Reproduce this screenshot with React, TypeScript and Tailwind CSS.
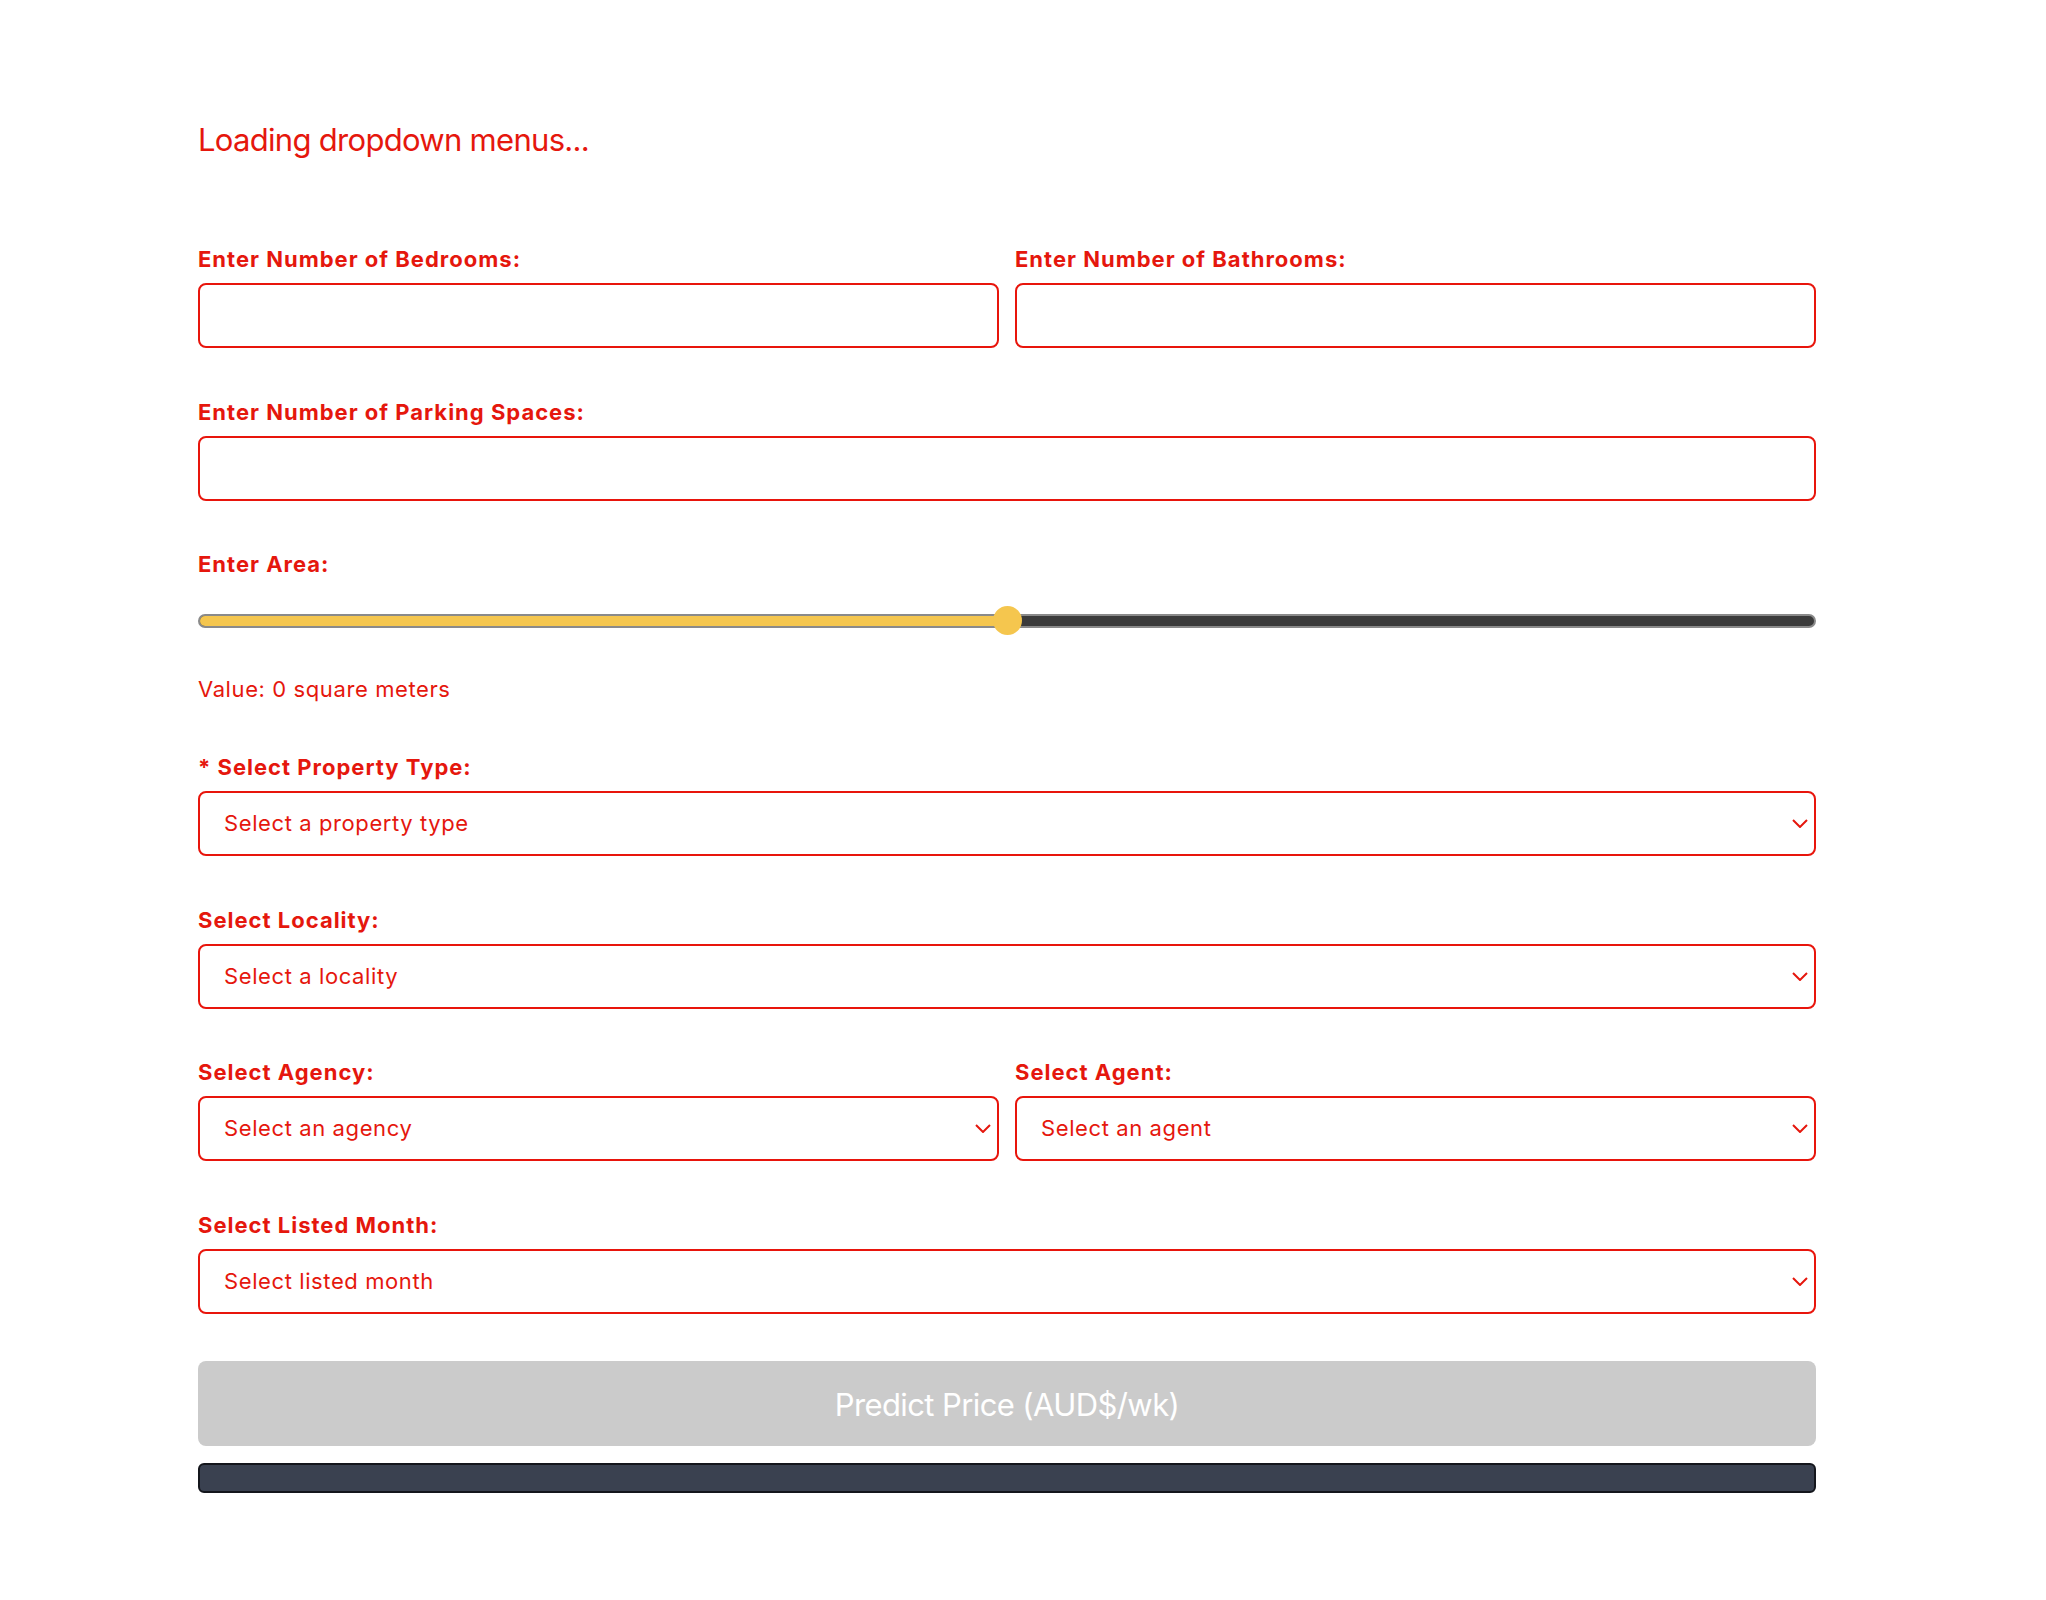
import React from "react";

const RED = "text-[#e5170d]";

function Label({ children }: { children: React.ReactNode }) {
  return (
    <label className={`mb-[10px] block text-[22px] leading-[27px] font-bold tracking-[1px] ${RED}`}>
      {children}
    </label>
  );
}

function TextField({ label }: { label: string }) {
  return (
    <div>
      <Label>{label}</Label>
      <input
        type="text"
        className="block h-[65px] w-full rounded-[8px] border-2 border-[#e8150c] bg-white px-[24px] text-[22px] outline-none"
      />
    </div>
  );
}

function SelectField({ label, placeholder }: { label: string; placeholder: string }) {
  return (
    <div>
      <Label>{label}</Label>
      <div className="flex h-[65px] w-full items-center justify-between rounded-[8px] border-2 border-[#e8150c] bg-white pl-[24px] pr-[6px]">
        <span className={`text-[22px] leading-[27px] tracking-[0.6px] ${RED}`}>{placeholder}</span>
        <svg width="16" height="9" viewBox="0 0 16 9" fill="none">
          <polyline points="1,1 8,8 15,1" stroke="#e5170d" strokeWidth="2" />
        </svg>
      </div>
    </div>
  );
}

export default function App() {
  const area = 0;
  return (
    <main className="min-h-screen bg-white font-['Inter','Liberation_Sans',sans-serif]">
      <div className="ml-[198px] w-[1618px] pt-[120px] pb-[100px]">
        <p className={`text-[31px] leading-[39px] tracking-[-0.7px] ${RED}`}>Loading dropdown menus...</p>

        <div className="mt-[87px] flex flex-col gap-[50.5px]">
          <div className="grid grid-cols-2 gap-[16px]">
            <TextField label="Enter Number of Bedrooms:" />
            <TextField label="Enter Number of Bathrooms:" />
          </div>

          <TextField label="Enter Number of Parking Spaces:" />

          <div>
            <label className={`block text-[22px] leading-[27px] font-bold tracking-[1px] ${RED}`}>Enter Area:</label>
            <div className="relative mt-[28px] flex h-[29px] items-center">
              <div className="flex h-[14px] w-full overflow-hidden rounded-full border-2 border-[#8a8a8a] bg-[#3b3b3b]">
                <div className="h-full w-1/2 bg-[#f5c64e]" />
              </div>
              <div className="absolute left-[795px] top-0 h-[29px] w-[29px] rounded-full bg-[#f5c64e]" />
            </div>
            <p className={`mt-[41px] text-[22px] leading-[27px] tracking-[0.6px] ${RED}`}>Value: {area} square meters</p>
          </div>
        </div>

        <div className="mt-[51px] flex flex-col gap-[50.5px]">
          <SelectField label="* Select Property Type:" placeholder="Select a property type" />
          <SelectField label="Select Locality:" placeholder="Select a locality" />
          <div className="grid grid-cols-2 gap-[16px]">
            <SelectField label="Select Agency:" placeholder="Select an agency" />
            <SelectField label="Select Agent:" placeholder="Select an agent" />
          </div>
          <SelectField label="Select Listed Month:" placeholder="Select listed month" />
        </div>

        <button
          disabled
          className="mt-[47px] flex h-[85px] w-full items-center justify-center rounded-[8px] bg-[#cbcbcb] pt-[4px] text-[31px] tracking-[-0.6px] text-white"
        >
          Predict Price (AUD$/wk)
        </button>
        <div className="mt-[17px] h-[30px] w-full rounded-[6px] border-2 border-[#14161c] bg-[#3a4150]" />
      </div>
    </main>
  );
}
